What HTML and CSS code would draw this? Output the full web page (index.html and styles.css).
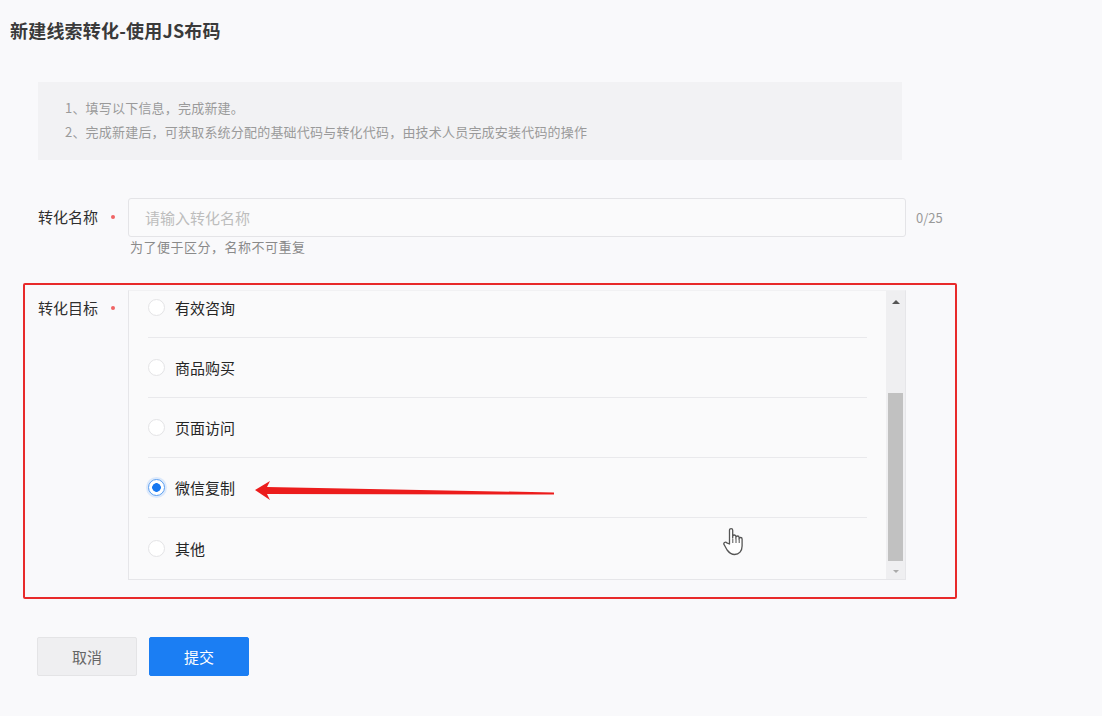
FILE: index.html
```html
<!DOCTYPE html>
<html lang="zh">
<head>
<meta charset="utf-8">
<title>新建线索转化-使用JS布码</title>
<link rel="stylesheet" href="styles.css">
</head>
<body>
<div class="page">
  <h1 class="title">新建线索转化-使用JS布码</h1>
  <div class="notes">
    <p>1、填写以下信息，完成新建。</p>
    <p>2、完成新建后，可获取系统分配的基础代码与转化代码，由技术人员完成安装代码的操作</p>
  </div>

  <div class="row row-name">
    <div class="label">转化名称<span class="req"></span></div>
    <div class="field">
      <div class="input-line">
        <div class="input">请输入转化名称</div>
        <span class="count">0/25</span>
      </div>
      <div class="hint">为了便于区分，名称不可重复</div>
    </div>
  </div>

  <div class="highlight">
    <div class="row row-goal">
      <div class="label">转化目标<span class="req"></span></div>
      <div class="listbox">
        <div class="viewport">
          <ul class="options">
            <li class="opt"><span class="radio"></span>有效咨询</li>
            <li class="opt"><span class="radio"></span>商品购买</li>
            <li class="opt"><span class="radio"></span>页面访问</li>
            <li class="opt"><span class="radio checked"></span>微信复制</li>
            <li class="opt last"><span class="radio"></span>其他</li>
          </ul>
        </div>
        <div class="scrollbar">
          <span class="arrow-up"></span>
          <span class="thumb"></span>
          <span class="arrow-down"></span>
        </div>
        <svg class="pointer-arrow" width="302" height="20" viewBox="0 0 302 20">
          <polygon points="1,9 16,0 13,6 300,11.5 300,13.5 13,13 16,19" fill="#ec1c1c"/>
        </svg>
        <svg class="hand" width="22" height="30" viewBox="0 0 22 30">
          <path d="M6.5 17 V3.2 a1.6 1.6 0 0 1 3.2 0 V11 V9.6 a1.6 1.6 0 0 1 3.2 0 V11.6 V10.6 a1.6 1.6 0 0 1 3.2 0 V12.6 V12 a1.5 1.5 0 0 1 3 0 V19 c0 5 -3 8.5 -7.5 8.5 c-3.5 0 -5.5 -1.8 -7.5 -4.5 L1.2 17.8 a1.6 1.6 0 0 1 2.6 -1.9 Z" fill="#fff" stroke="#555" stroke-width="1.3" stroke-linejoin="round"/>
          <path d="M9.8 12 V16 M13 12 V16 M16.2 13 V16" stroke="#555" stroke-width="1"/>
        </svg>
      </div>
    </div>
  </div>

  <div class="actions">
    <button class="btn btn-cancel">取消</button>
    <button class="btn btn-submit">提交</button>
  </div>
</div>
</body>
</html>
```

FILE: styles.css
```css
* { box-sizing: border-box; }
html, body {
  margin: 0;
  padding: 0;
  background: #f9f9fb;
}
body {
  font-family: "Noto Sans CJK SC", "Noto Sans", "Liberation Sans", sans-serif;
  color: #333;
  width: 1102px;
  height: 716px;
  overflow: hidden;
}
.page {
  padding: 18px 0 0 0;
}
.title {
  margin: 0 0 0 10px;
  font-size: 18px;
  line-height: 24px;
  font-weight: 700;
  color: #3a3a3a;
  letter-spacing: 0.2px;
}
.notes {
  margin: 40px 0 0 38px;
  width: 864px;
  height: 78px;
  background: #f2f2f4;
  padding: 14px 27px;
}
.notes p {
  margin: 0;
  font-size: 13px;
  line-height: 24px;
  color: #9a9a9a;
  letter-spacing: 0.2px;
}
.row {
  display: flex;
  align-items: flex-start;
}
.row-name {
  margin-top: 38px;
  padding-left: 38px;
}
.label {
  width: 90px;
  flex: none;
  font-size: 15px;
  line-height: 20px;
  color: #2e2e2e;
  display: flex;
  align-items: center;
}
.row-name .label { margin-top: 9px; }
.req {
  width: 4px;
  height: 4px;
  border-radius: 50%;
  background: #f06464;
  margin-left: 13px;
}
.field { display: flex; flex-direction: column; }
.input-line {
  display: flex;
  align-items: center;
}
.input {
  width: 778px;
  height: 39px;
  border: 1px solid #e4e4e7;
  border-radius: 3px;
  background: #fafafb;
  padding: 0 16px;
  font-size: 15px;
  line-height: 37px;
  color: #bdbdbd;
}
.count {
  margin-left: 10px;
  font-size: 13px;
  color: #999;
}
.hint {
  margin-top: 1px;
  padding-left: 2px;
  font-size: 13px;
  line-height: 18px;
  color: #8a8a8a;
  letter-spacing: 0.5px;
}
.highlight {
  margin: 27px 0 0 23px;
  width: 934px;
  height: 316px;
  border: 2px solid #e82a2a;
  border-radius: 2px;
  padding: 5px 49px 0 13px;
}
.row-goal .label { margin-top: 8px; }
.listbox {
  position: relative;
  width: 778px;
  height: 290px;
  border: 1px solid #e6e6e9;
  border-top-color: #f1f1f3;
  display: flex;
  background: #fafafb;
}
.viewport {
  flex: 1;
  overflow: hidden;
  padding: 0 19px;
}
.options {
  list-style: none;
  margin: -13px 0 0 0;
  padding: 0;
}
.opt {
  height: 60px;
  display: flex;
  align-items: center;
  font-size: 15px;
  color: #262626;
  border-bottom: 1px solid #e9e9ec;
}
.opt.last { border-bottom: none; }
.radio {
  width: 17px;
  height: 17px;
  border-radius: 50%;
  border: 1px solid #e4e4e6;
  background: #fff;
  margin-right: 10px;
  flex: none;
}
.radio.checked {
  border-color: #5a9ef0;
  background: #fff radial-gradient(circle, #1677f0 0, #1677f0 4px, transparent 4.6px);
  box-shadow: 0 0 0 2px #dce9fb;
}
.scrollbar {
  width: 19px;
  flex: none;
  background: #efeff1;
  display: flex;
  flex-direction: column;
  align-items: center;
  padding: 9px 0 5px;
}
.arrow-up {
  width: 0;
  height: 0;
  border-left: 4px solid transparent;
  border-right: 4px solid transparent;
  border-bottom: 4px solid #555;
}
.thumb {
  width: 15px;
  height: 168px;
  margin-top: 89px;
  background: #c1c1c1;
}
.arrow-down {
  margin-top: 9px;
  width: 0;
  height: 0;
  border-left: 3px solid transparent;
  border-right: 3px solid transparent;
  border-top: 3px solid #aaa;
}
.pointer-arrow {
  position: absolute;
  left: 125px;
  top: 190px;
}
.hand {
  position: absolute;
  left: 594px;
  top: 236px;
}
.actions {
  display: flex;
  gap: 12px;
  margin: 38px 0 0 37px;
}
.btn {
  width: 100px;
  height: 39px;
  border-radius: 2px;
  font-family: inherit;
  font-size: 15px;
  cursor: pointer;
}
.btn-cancel {
  background: #efeff1;
  border: 1px solid #e4e4e6;
  color: #666;
}
.btn-submit {
  background: #1b7ef3;
  border: 1px solid #1b7ef3;
  color: #fff;
}
```
